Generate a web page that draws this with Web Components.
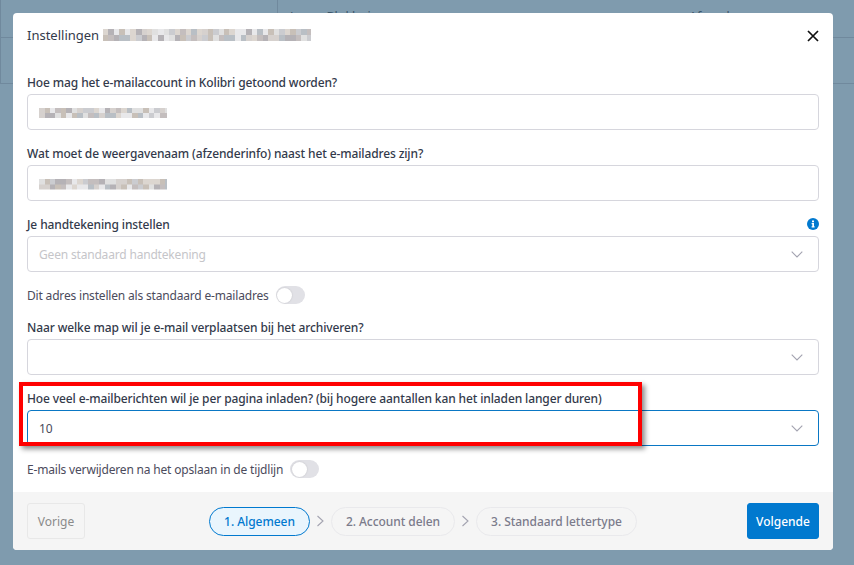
<!DOCTYPE html>
<html lang="nl">
<head>
<meta charset="utf-8">
<title>Instellingen</title>
<style>
    html, body { margin: 0; height: 100%; }
    body { font-family: "Noto Sans", "Open Sans", sans-serif; }
</style>
</head>
<body>
<settings-page>
    <span slot="title">Instellingen</span>

    <form-field label="Hoe mag het e-mailaccount in Kolibri getoond worden?">
        <text-box><pixel-blur seed="7" width="128" height="10"></pixel-blur></text-box>
    </form-field>
    <form-field label="Wat moet de weergavenaam (afzenderinfo) naast het e-mailadres zijn?">
        <text-box><pixel-blur seed="23" width="128" height="11"></pixel-blur></text-box>
    </form-field>
    <form-field label="Je handtekening instellen" info>
        <text-box arrow placeholder>Geen standaard handtekening</text-box>
    </form-field>
    <toggle-row>Dit adres instellen als standaard e-mailadres</toggle-row>
    <form-field label="Naar welke map wil je e-mail verplaatsen bij het archiveren?">
        <text-box arrow></text-box>
    </form-field>
    <form-field label="Hoe veel e-mailberichten wil je per pagina inladen? (bij hogere aantallen kan het inladen langer duren)">
        <text-box arrow focused>10</text-box>
    </form-field>
    <toggle-row>E-mails verwijderen na het opslaan in de tijdlijn</toggle-row>
</settings-page>

<script>
(function() {
    "use strict";

    const chevron = `<svg width="12" height="7" viewBox="0 0 12 7" fill="none" stroke="#a3a3b0" stroke-width="1.1"><path d="M.7.7 6 6 11.3.7"/></svg>`;

    // Mosaic standing in for the text that was blurred out of the screenshot.
    class PixelBlur extends HTMLElement {
        connectedCallback() {
            const shadowRoot = this.attachShadow({mode: 'open'});
            const width = parseInt(this.getAttribute('width'));
            const height = parseInt(this.getAttribute('height'));
            let seed = parseInt(this.getAttribute('seed')) || 1;
            const cell = 5.5;
            const palette = ['#c4bebe', '#d6d1ce', '#b5b2b6', '#e0e0e0', '#cbccd0', '#b9bfc5', '#e8e8ea', '#c8c0b8', '#dcd6d0'];
            const layers = [];
            for (let row = 0; row < 2; row++) {
                const stops = [];
                for (let x = 0; x < width; x += cell) {
                    seed = (seed * 137 + 41) % 1009;
                    const colour = palette[seed % palette.length];
                    stops.push(`${colour} ${x}px ${x + cell}px`);
                }
                const y = row === 0 ? '0 0' : '0 100%';
                layers.push(`linear-gradient(90deg, ${stops.join(', ')}) ${y} / 100% 50% no-repeat`);
            }
            shadowRoot.innerHTML = `
                <style>
                    :host { display: inline-block; vertical-align: middle; }
                    div { width: ${width}px; height: ${height}px; background: ${layers.join(', ')}; }
                </style>
                <div></div>
            `;
        }
    }

    class TextBox extends HTMLElement {
        constructor() {
            super();
            this.attachShadow({mode: 'open'}).innerHTML = `
                <style>
                    :host {
                        display: flex; align-items: center; justify-content: space-between;
                        box-sizing: border-box; height: 36px; padding: 0 15px 0 11px;
                        background: #fff; border: 1px solid #d6d6dd; border-radius: 4px;
                        font-size: 12px; letter-spacing: -.18px; color: #4b4b5c;
                    }
                    :host([placeholder]) { color: #c5c5c9; }
                    :host([focused]) { border-color: #0a77c4; }
                    svg { display: block; }
                </style>
                <span><slot></slot></span>
                ${this.hasAttribute('arrow') ? chevron : ''}
            `;
        }
    }

    class FormField extends HTMLElement {
        constructor() {
            super();
            const info = this.hasAttribute('info') ? `
                <svg width="12" height="12" viewBox="0 0 12 12"><circle cx="6" cy="6" r="6" fill="#0179cf"/><path d="M5 2.6h2v1.6H5zM4.6 5h2.4v3.2h.6v1.2H4.6V8.2h.7V6.2h-.7z" fill="#fff"/></svg>` : '';
            this.attachShadow({mode: 'open'}).innerHTML = `
                <style>
                    :host { display: block; }
                    header {
                        display: flex; align-items: center; justify-content: space-between;
                        height: 18px; margin: 2px 0 3px;
                        font-size: 12px; letter-spacing: -.12px; font-weight: 500; color: #333a4b; white-space: nowrap;
                    }
                </style>
                <header><span>${this.getAttribute('label')}</span>${info}</header>
                <slot></slot>
            `;
        }
    }

    class ToggleRow extends HTMLElement {
        constructor() {
            super();
            this.attachShadow({mode: 'open'}).innerHTML = `
                <style>
                    :host {
                        display: flex; align-items: center; gap: 7px;
                        margin-top: 2px; height: 18px;
                        font-size: 12px; letter-spacing: -.18px; color: #4b4b5c;
                    }
                    i {
                        display: flex; align-items: center; box-sizing: border-box;
                        width: 29px; height: 18px; padding: 0 1.5px;
                        background: #e1e1e6; border-radius: 9px;
                    }
                    i::before {
                        content: ""; width: 15px; height: 15px; background: #fff;
                        border-radius: 50%; box-shadow: 0 0 2px rgba(0, 0, 0, .15);
                    }
                </style>
                <span><slot></slot></span><i></i>
            `;
        }
    }

    class StepPill extends HTMLElement {
        constructor() {
            super();
            this.attachShadow({mode: 'open'}).innerHTML = `
                <style>
                    :host {
                        display: flex; align-items: center; box-sizing: border-box;
                        height: 29px; padding: 0 14px; border: 1px solid #e9e9ec; border-radius: 15px;
                        font-size: 12px; letter-spacing: -.05px; font-weight: 500; color: #7b7b8b; white-space: nowrap;
                    }
                    :host([active]) { background: #e9f5fd; border-color: #0179cf; color: #0179cf; }
                </style>
                <slot></slot>
            `;
        }
    }

    class ActionButton extends HTMLElement {
        constructor() {
            super();
            this.attachShadow({mode: 'open'}).innerHTML = `
                <style>
                    :host {
                        display: flex; align-items: center; justify-content: center; box-sizing: border-box;
                        height: 36px; border-radius: 3px;
                        border: 1px solid #e8e8e8; color: #8a8a8a; font-size: 12px;
                    }
                    :host([primary]) { background: #0179cf; border-color: #0179cf; color: #fff; font-weight: 500; }
                </style>
                <slot></slot>
            `;
        }
    }

    // The table behind the dialog; only its edges stay visible.
    class BackdropTable extends HTMLElement {
        constructor() {
            super();
            this.attachShadow({mode: 'open'}).innerHTML = `
                <style>
                    :host {
                        display: grid; grid-template-columns: 277px 412px 1fr; grid-template-rows: 38px 46px 1fr;
                        height: 100%; background: #7f9bae;
                        font-size: 12.5px; color: #3b5569; overflow: hidden;
                    }
                    div { border-bottom: 1px solid #70899d; border-left: 1px solid #70899d; padding: 8px 12px; white-space: nowrap; }
                    div:nth-child(3n+1) { border-left: 0; text-indent: -12px; padding-left: 12px; }
                    .tall { grid-column: 1 / -1; border: 0; }
                </style>
                <div>e</div><div>Laura Blokhuizen</div><div>Afzender</div>
                <div></div><div></div><div></div>
                <div class="tall"></div>
            `;
        }
    }

    class SettingsPage extends HTMLElement {
        constructor() {
            super();
            this.attachShadow({mode: 'open'}).innerHTML = `
                <style>
                    :host { display: block; position: relative; height: 565px; overflow: hidden; }
                    backdrop-table { position: absolute; inset: 0; }
                    section {
                        position: absolute; left: 13px; top: 13px; width: 820px; height: 537px;
                        display: flex; flex-direction: column;
                        background: #fff; border-radius: 4px; overflow: hidden;
                    }
                    header {
                        flex: none; height: 44px; padding: 0 14px;
                        display: flex; align-items: center; justify-content: space-between;
                        font-size: 13px; color: #333a4b;
                    }
                    header svg { margin-top: 2px; }
                    .name { display: inline-flex; align-items: center; gap: 4px; }
                    main {
                        flex: 1; padding: 14px 14px 14px;
                        display: flex; flex-direction: column; gap: 12px;
                    }
                    footer {
                        flex: none; height: 58px; padding: 0 14px; background: #f5f5f5;
                        display: grid; grid-template-columns: 1fr auto 1fr; align-items: center;
                    }
                    .steps { display: flex; align-items: center; gap: 6px; }
                    .prev { justify-self: start; width: 58px; }
                    .next { justify-self: end; width: 72px; }
                    .mark {
                        position: absolute; left: 19px; top: 382px; width: 623px; height: 64px;
                        box-sizing: border-box; border: 4px solid #f00;
                        box-shadow: 3px 3px 5px rgba(0, 0, 0, .45);
                    }
                    svg { display: block; }
                </style>
                <backdrop-table></backdrop-table>
                <section>
                    <header>
                        <span class="name"><slot name="title"></slot><pixel-blur seed="11" width="208" height="12"></pixel-blur></span>
                        <svg width="12" height="12" viewBox="0 0 12 12" stroke="#111" stroke-width="1.7" fill="none"><path d="M1 1l10 10M11 1 1 11"/></svg>
                    </header>
                    <main><slot></slot></main>
                    <footer>
                        <action-button class="prev">Vorige</action-button>
                        <div class="steps">
                            <step-pill active>1. Algemeen</step-pill>
                            <svg width="9" height="12" viewBox="0 0 9 12" fill="none" stroke="#a3a3b0" stroke-width="1.1"><path d="M1.5 1l5.5 5-5.5 5"/></svg>
                            <step-pill>2. Account delen</step-pill>
                            <svg width="9" height="12" viewBox="0 0 9 12" fill="none" stroke="#a3a3b0" stroke-width="1.1"><path d="M1.5 1l5.5 5-5.5 5"/></svg>
                            <step-pill>3. Standaard lettertype</step-pill>
                        </div>
                        <action-button class="next" primary>Volgende</action-button>
                    </footer>
                </section>
                <div class="mark"></div>
            `;
        }
    }

    window.customElements.define('pixel-blur', PixelBlur);
    window.customElements.define('text-box', TextBox);
    window.customElements.define('form-field', FormField);
    window.customElements.define('toggle-row', ToggleRow);
    window.customElements.define('step-pill', StepPill);
    window.customElements.define('action-button', ActionButton);
    window.customElements.define('backdrop-table', BackdropTable);
    window.customElements.define('settings-page', SettingsPage);
})();
</script>
</body>
</html>
